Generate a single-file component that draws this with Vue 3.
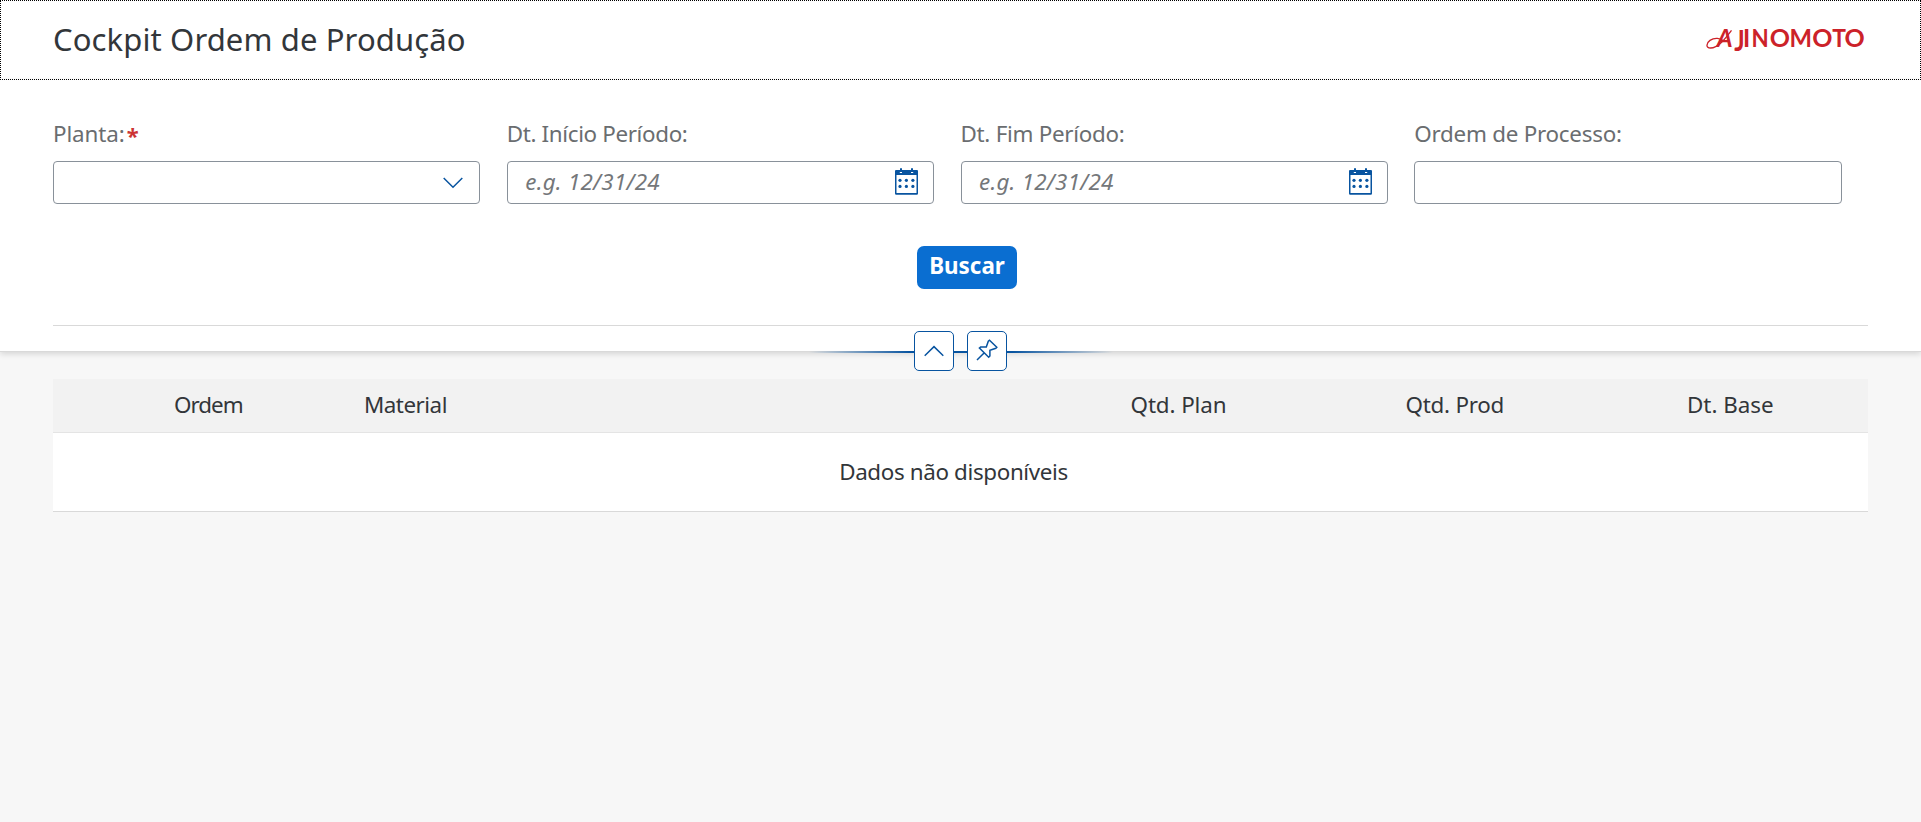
<script setup>
const fields = [
  { label: 'Planta:', cls: 'l0', required: true, icon: 'chevron' },
  { label: 'Dt. Início Período:', cls: 'l1', placeholder: 'e.g. 12/31/24', icon: 'calendar' },
  { label: 'Dt. Fim Período:', cls: 'l2', placeholder: 'e.g. 12/31/24', icon: 'calendar' },
  { label: 'Ordem de Processo:', cls: 'l3' },
]
const columns = [
  { name: 'Ordem', cls: 'c-order' },
  { name: 'Material', cls: 'c-material' },
  { name: 'Qtd. Plan', cls: 'c-plan' },
  { name: 'Qtd. Prod', cls: 'c-prod' },
  { name: 'Dt. Base', cls: 'c-base' },
]
</script>

<template>
  <div class="page">
    <header class="bar">
      <h1>Cockpit Ordem de Produção</h1>
      <svg class="logo" width="162" height="32" viewBox="0 0 162 32">
        <g class="word">
          <text class="a" x="10.8" y="24.3">A</text>
          <text class="j" transform="translate(28.2 27.6) scale(.84 1)">J</text>
          <text x="37" y="24.3">I</text>
          <text transform="translate(45.6 24.3) scale(.92 1)">N</text>
          <text transform="translate(63.8 24.3) scale(1.03 1)">O</text>
          <text transform="translate(83.6 24.3) scale(.98 1)">M</text>
          <text transform="translate(106.2 24.3) scale(1.03 1)">O</text>
          <text transform="translate(126.2 24.3) scale(.94 1)">T</text>
          <text transform="translate(138.5 24.3) scale(1.03 1)">O</text>
        </g>
        <path d="M25.500 7.300 C19 16 12 25 4.500 25 C-.3 25 0 20.300 4 17.400 C8.500 14.200 14.500 14.800 18 18.300" fill="none" stroke="#cc2229" stroke-width="1.3" />
      </svg>
    </header>

    <section class="filters">
      <div class="grid">
        <div v-for="f in fields" :key="f.label" class="field">
          <label><span :class="f.cls">{{ f.label }}</span><b v-if="f.required">*</b></label>
          <div class="box">
            <span class="ph">{{ f.placeholder }}</span>
            <svg v-if="f.icon === 'chevron'" class="chev" width="20" height="12" viewBox="0 0 20 12">
              <path d="M.7 1 L10 10.2 L19.3 1" />
            </svg>
            <svg v-if="f.icon === 'calendar'" class="cal" width="23" height="27" viewBox="0 0 23 27">
              <path d="M1 2h4V.3h2V2h9V.3h2V2H22a1 1 0 0 1 1 1v22.500a1.200 1.200 0 0 1-1.200 1.200H1.200A1.200 1.200 0 0 1 0 25.500V3a1 1 0 0 1 1-1z" />
              <path class="paper" d="M1.500 7h20v18h-20z" />
              <path class="paper" d="M4.800 4h2.200v1H4.800zM16 4h2.200v1H16z" />
              <g v-for="y in [12.3, 18.4]" :key="y">
                <circle v-for="x in [5, 11.4, 17.9]" :key="x" :cx="x" :cy="y" r="1.6" />
              </g>
            </svg>
          </div>
        </div>
      </div>
      <div class="actions"><button class="go">Buscar</button></div>
      <div class="rule"></div>
      <div class="toggles">
        <div class="line"></div>
        <button>
          <svg width="20" height="12" viewBox="0 0 20 12"><path d="M.7 10.800 L10 1.600 L19.300 10.800" /></svg>
        </button>
        <button>
          <svg width="22" height="22" viewBox="0 0 22 22">
            <path d="M1 21 L8.300 13.700 M13.500 1.200 L20.800 8.300 L19.800 9.300 L13.900 11.400 L13.900 17 L12.700 18.200 L3.400 9.100 L4.700 7.900 L10.300 8 L12.300 2.200 Z" />
          </svg>
        </button>
      </div>
    </section>

    <section class="table">
      <div class="head">
        <span v-for="c in columns" :key="c.name" :class="c.cls">{{ c.name }}</span>
      </div>
      <div class="empty">Dados não disponíveis</div>
    </section>
  </div>
</template>

<style>
body { background: #f7f7f7; }
</style>

<style scoped>
.page { min-height: 822px; background: #f7f7f7; font-family: "Noto Sans", sans-serif; font-size: 22.4px; color: #32363a; }
.page * { box-sizing: border-box; }
.bar { height: 80px; border: 1px dotted #000; background: #fff; display: flex; align-items: center; justify-content: space-between; padding: 0 52px 2px 52px; }
h1 { margin: 0; font-size: 31px; font-weight: 400; line-height: 42px; letter-spacing: .12px; }
.logo { display: block; overflow: visible; }
.word { font-family: Lato, sans-serif; font-weight: 700; font-size: 24.3px; fill: #cc2229; }
.word .a { font-style: italic; }
.word .j { font-size: 29px; }

.filters { height: 272px; background: #fff; border-bottom: 1px solid #d9d9d9; box-shadow: 0 2px 6px rgba(0, 0, 0, .14); padding: 39px 53px 0; position: relative; }
.grid { display: grid; grid-template-columns: repeat(4, 1fr); }
.field { padding-right: 26.6px; }
.field:last-child { padding-right: 26px; }
label { display: flex; height: 30px; line-height: 30px; color: #6a6d70; white-space: nowrap; }
label b { color: #cc3333; font-size: 22px; margin-left: 2px; position: relative; top: 1px; }
.l0 { letter-spacing: -.1px; }
.l1 { letter-spacing: -.35px; }
.l2 { letter-spacing: -.28px; }
.l3 { letter-spacing: -.25px; }
.box { margin-top: 12px; height: 43px; border: 1px solid #89919a; border-radius: 4px; display: flex; align-items: center; justify-content: space-between; padding: 0 16px 0 17.5px; }
.ph { font-style: italic; color: #74777a; letter-spacing: .25px; line-height: 38px; padding-bottom: 2px; }
.chev path, .toggles path { fill: none; stroke: #0854a0; stroke-width: 1.5; }
.cal { fill: #0854a0; margin: -2px -1px 0 0; }
.paper { fill: #fff; }

.actions { margin-top: 42px; display: flex; justify-content: center; padding-left: 13px; }
.go { width: 100px; height: 43px; border: 0; border-radius: 7px; background: #0a6ed1; color: #fff; font: 700 22.4px/38px "Noto Sans", sans-serif; padding: 0 0 3px; }
.rule { margin-top: 36px; height: 1px; background: #d9d9d9; }
.toggles { position: absolute; left: 0; right: 0; top: 251px; height: 40px; display: flex; justify-content: center; gap: 13px; z-index: 1; }
.line { position: absolute; left: 50%; top: 20px; width: 304px; height: 2px; margin-left: -152px; background: linear-gradient(90deg, rgba(8, 84, 160, 0), #0854a0 33%, #0854a0 67%, rgba(8, 84, 160, 0)); }
.toggles button { position: relative; width: 40px; height: 40px; padding: 0; border: 1px solid #0854a0; border-radius: 5px; background: #fff; display: flex; align-items: center; justify-content: center; }
.toggles button:last-child svg { margin-top: -3px; }

.table { margin: 27px 53px 0; }
.head { height: 54px; background: #f2f2f2; border-bottom: 1px solid #e4e4e4; display: grid; grid-template-columns: 190px 766.5px 275px 281.5px 1fr; padding: 0 0 2px 121px; align-items: center; line-height: 50px; white-space: nowrap; }
.c-order { letter-spacing: -1px; }
.c-material { letter-spacing: -.5px; }
.c-plan { letter-spacing: -.1px; }
.c-prod { letter-spacing: -.25px; }
.empty { height: 79px; background: #fff; border-bottom: 1px solid #d9d9d9; line-height: 77px; letter-spacing: -.36px; text-align: center; padding-right: 14px; }
</style>
